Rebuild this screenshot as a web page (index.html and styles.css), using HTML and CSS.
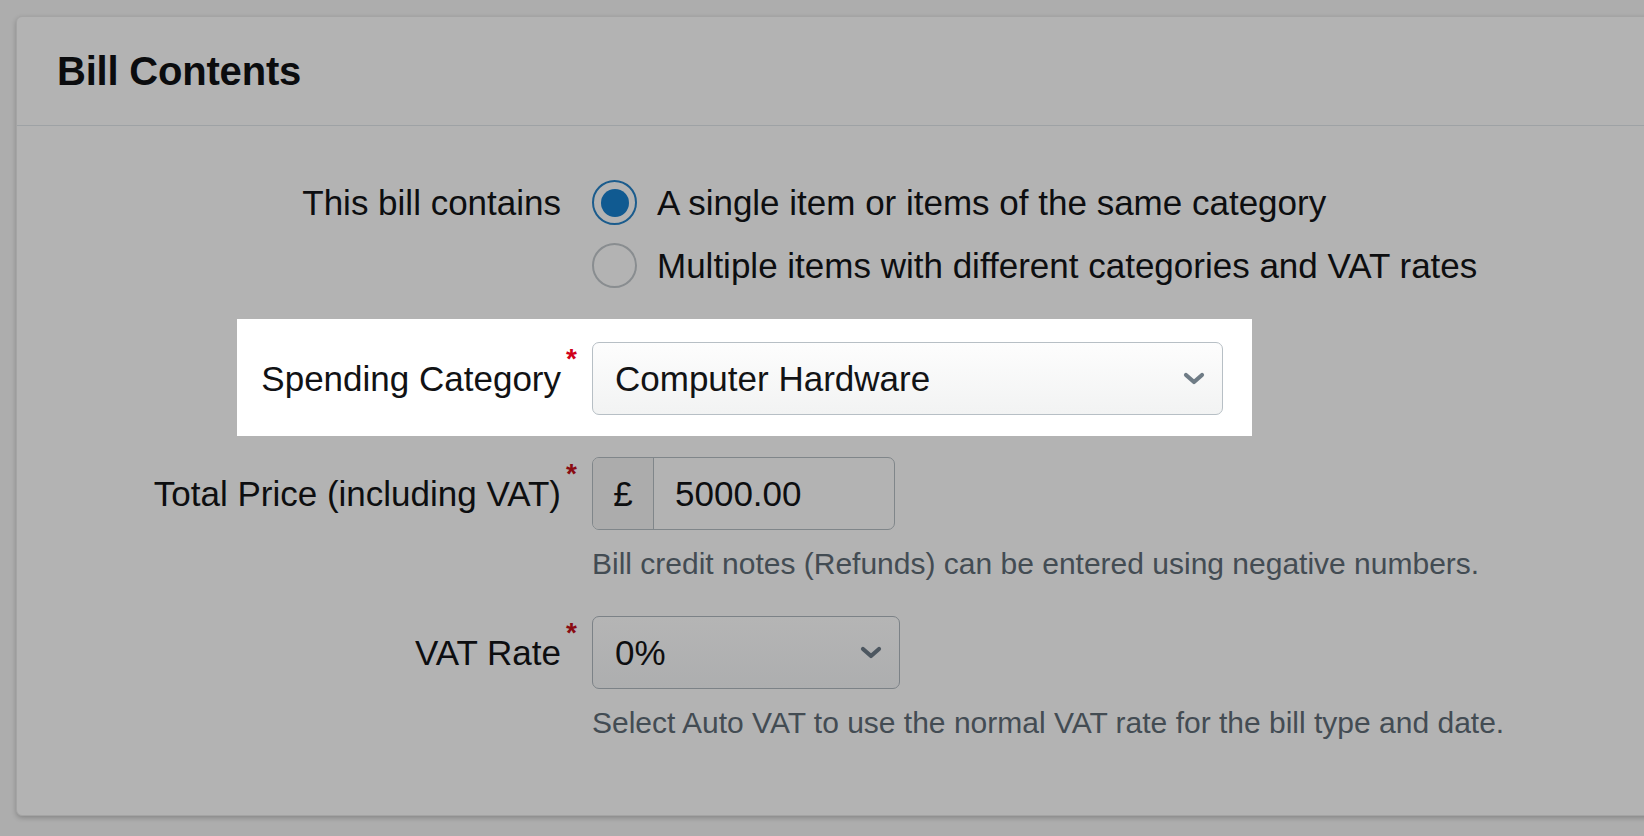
FILE: index.html
```html
<!DOCTYPE html>
<html lang="en">
<head>
<meta charset="utf-8">
<title>Bill Contents</title>
<link rel="stylesheet" href="styles.css">
</head>
<body>
<div class="page">
  <section class="card">
    <header class="card-header">
      <h2 class="card-title">Bill Contents</h2>
    </header>
    <div class="card-body">
      <div class="row">
        <div class="row-label"><span class="label-text">This bill contains</span></div>
        <div class="options">
          <label class="option">
            <span class="radio checked"></span>
            <span class="option-text">A single item or items of the same category</span>
          </label>
          <label class="option">
            <span class="radio"></span>
            <span class="option-text">Multiple items with different categories and VAT rates</span>
          </label>
        </div>
      </div>

      <div class="row spot">
        <div class="row-label"><span class="label-text required">Spending Category</span></div>
        <div class="control">
          <div class="select select-wide">
            <span class="select-value">Computer Hardware</span>
            <svg class="chevron" width="22" height="13" viewBox="0 0 22 13"><path d="M3 3 L11 10 L19 3" fill="none" stroke="currentColor" stroke-width="4.2" stroke-linecap="round" stroke-linejoin="round"/></svg>
          </div>
        </div>
      </div>

      <div class="row row-price">
        <div class="row-label"><span class="label-text required">Total Price (including VAT)</span></div>
        <div class="control">
          <div class="input-group">
            <span class="addon">£</span>
            <span class="input-value">5000.00</span>
          </div>
          <p class="help">Bill credit notes (Refunds) can be entered using negative numbers.</p>
        </div>
      </div>

      <div class="row row-vat">
        <div class="row-label"><span class="label-text required">VAT Rate</span></div>
        <div class="control">
          <div class="select select-narrow">
            <span class="select-value">0%</span>
            <svg class="chevron" width="22" height="13" viewBox="0 0 22 13"><path d="M3 3 L11 10 L19 3" fill="none" stroke="currentColor" stroke-width="4.2" stroke-linecap="round" stroke-linejoin="round"/></svg>
          </div>
          <p class="help">Select Auto VAT to use the normal VAT rate for the bill type and date.</p>
        </div>
      </div>
    </div>
  </section>
</div>
</body>
</html>
```

FILE: styles.css
```css
* {
  box-sizing: border-box;
}

html, body {
  margin: 0;
  padding: 0;
}

body {
  background: #adadad;
  font-family: "Liberation Sans", Arial, Helvetica, sans-serif;
  color: #0d0e10;
  overflow: hidden;
  height: 836px;
}

.page {
  padding: 16px 0 0 16px;
}

.card {
  margin-right: -40px;
  background: #b3b3b3;
  border: 1px solid #a4a4a4;
  border-radius: 6px;
  box-shadow: 0 2px 5px rgba(0, 0, 0, 0.22);
}

.card-header {
  padding: 30px 40px 30px 40px;
  border-bottom: 1px solid #9ea2a5;
}

.card-title {
  margin: 0;
  font-size: 40px;
  line-height: 48px;
  font-weight: 700;
  color: #0b0c0e;
  letter-spacing: -0.2px;
}

.card-body {
  padding: 45px 0 74px 113px;
}

.row {
  display: flex;
  align-items: flex-start;
  gap: 31px;
  font-size: 35px;
}

.row-label {
  flex: 0 0 431px;
  text-align: right;
  white-space: nowrap;
}

.label-text {
  position: relative;
  display: inline-block;
  line-height: 73px;
}

.row:first-child .label-text {
  line-height: 63px;
}

.label-text.required::after {
  content: "*";
  position: absolute;
  top: 3px;
  right: -16px;
  font-size: 28px;
  line-height: 28px;
  font-weight: 700;
  color: #8a0b12;
}

.options {
  display: flex;
  flex-direction: column;
}

.option {
  display: flex;
  align-items: center;
  gap: 20px;
  height: 63px;
  line-height: 63px;
  white-space: nowrap;
}

.radio {
  flex: 0 0 45px;
  width: 45px;
  height: 45px;
  border-radius: 50%;
  border: 2px solid #898d90;
  display: flex;
  align-items: center;
  justify-content: center;
}

.radio.checked {
  border-color: #1b5c8d;
}

.radio.checked::after {
  content: "";
  width: 28px;
  height: 28px;
  border-radius: 50%;
  background: #105a91;
}

.spot {
  margin-top: 22px;
  margin-left: 107px;
  width: fit-content;
  background: #ffffff;
  padding: 23px 29px 21px 0;
}

.spot .row-label {
  flex-basis: 324px;
  color: #111214;
}

.spot .label-text.required::after {
  color: #d0021b;
}

.control {
  display: flex;
  flex-direction: column;
}

.select {
  height: 73px;
  display: flex;
  align-items: center;
  justify-content: space-between;
  padding: 0 17px 0 22px;
  border-radius: 7px;
  white-space: nowrap;
}

.select-wide {
  width: 631px;
  border: 1.5px solid #b7bfc5;
  background: linear-gradient(#fdfdfd, #f2f3f3);
  color: #121315;
}

.select-wide .chevron {
  color: #6f7c86;
}

.select-narrow {
  width: 308px;
  border: 1.5px solid #7c8287;
  background: linear-gradient(#b5b5b5, #adaeaf);
}

.select-narrow .chevron {
  color: #4d5760;
}

.row-price {
  margin-top: 21px;
}

.input-group {
  width: 303px;
  height: 73px;
  display: flex;
  border: 1.5px solid #80868a;
  border-radius: 7px;
  overflow: hidden;
}

.addon {
  flex: 0 0 61px;
  display: flex;
  align-items: center;
  justify-content: center;
  background: #acacac;
  border-right: 1.5px solid #80868a;
}

.input-value {
  flex: 1;
  display: flex;
  align-items: center;
  padding-left: 21px;
}

.help {
  margin: 16px 0 0 0;
  font-size: 30px;
  line-height: 36px;
  color: #434c53;
  white-space: nowrap;
}

.row-vat {
  margin-top: 34px;
}
```
